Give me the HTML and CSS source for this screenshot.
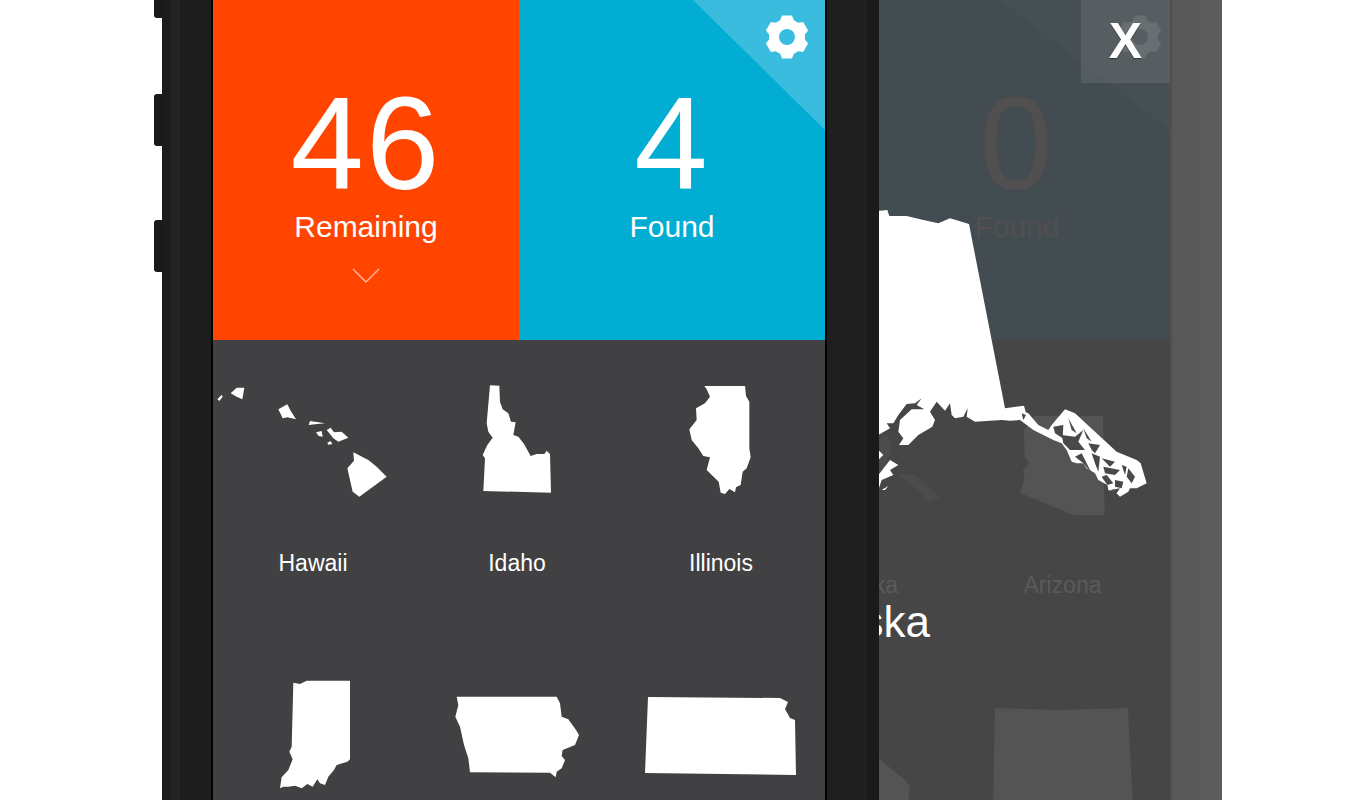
FILE: index.html
```html
<!DOCTYPE html>
<html lang="en">
<head>
    <meta charset="UTF-8">
    <meta name="viewport" content="width=device-width, initial-scale=1.0">
    <title>States</title>
    <link rel="stylesheet" href="styles.css">
</head>
<body>
    <div class="stage">
        <div class="phone">
            <div class="side-button side-button-mute"></div>
            <div class="side-button side-button-up"></div>
            <div class="side-button side-button-down"></div>
            <div class="screen">
                <div class="tiles">
                    <div class="tile tile-remaining">
                        <div class="count">46</div>
                        <div class="tile-label">Remaining</div>
                        <svg class="chevron" viewBox="0 0 28 16"><path d="M1 1 L14 14 L27 1"/></svg>
                    </div>
                    <div class="tile tile-found">
                        <div class="corner"></div>
                        <svg class="gear" viewBox="-24 -24 48 48">
                            <g id="gear-shape">
                                <circle r="13" class="gear-ring"/>
                                <polygon points="-7.5,-15 -5,-21.5 5,-21.5 7.5,-15"/>
                                <polygon points="-7.5,-15 -5,-21.5 5,-21.5 7.5,-15" transform="rotate(60)"/>
                                <polygon points="-7.5,-15 -5,-21.5 5,-21.5 7.5,-15" transform="rotate(120)"/>
                                <polygon points="-7.5,-15 -5,-21.5 5,-21.5 7.5,-15" transform="rotate(180)"/>
                                <polygon points="-7.5,-15 -5,-21.5 5,-21.5 7.5,-15" transform="rotate(240)"/>
                                <polygon points="-7.5,-15 -5,-21.5 5,-21.5 7.5,-15" transform="rotate(300)"/>
                            </g>
                        </svg>
                        <div class="count">4</div>
                        <div class="tile-label">Found</div>
                    </div>
                </div>
                <div class="states">
                    <div class="state">
                        <svg class="map" viewBox="9 30 612 360">
                            <polygon points="22,88 35,75 38,80 28,93"/>
                            <polygon points="62,70 80,53 103,53 97,88 80,80"/>
                            <polygon points="205,118 232,103 242,122 258,148 232,142 218,145"/>
                            <polygon points="296,165 300,153 345,160 315,163"/>
                            <polygon points="318,187 335,183 338,200 326,198"/>
                            <polygon points="350,180 362,173 372,187 395,185 415,203 385,215 370,205"/>
                            <polygon points="352,218 362,213 367,222 355,224"/>
                            <polygon points="430,247 475,270 500,290 530,320 448,380 428,365 412,295 432,272"/>
                        </svg>
                        <div class="state-name">Hawaii</div>
                    </div>
                    <div class="state">
                        <svg class="map" viewBox="-99 30 612 360">
                            <polygon points="120,46 148,47 150,95 158,118 175,130 183,155 197,157 190,195 205,200 222,222 232,240 242,258 260,252 283,252 290,242 300,252 303,368 100,363 105,265 98,255 112,225 128,203 115,185 110,160"/>
                        </svg>
                        <div class="state-name">Idaho</div>
                    </div>
                    <div class="state">
                        <svg class="map" viewBox="513 30 612 360">
                            <polygon points="763,48 885,48 888,78 898,95 898,235 902,262 890,295 878,305 872,345 858,352 855,367 838,357 825,372 812,368 806,335 770,300 780,262 760,258 745,235 725,210 718,178 740,150 738,115 765,100 780,80 770,58"/>
                        </svg>
                        <div class="state-name">Illinois</div>
                    </div>
                    <div class="state">
                        <svg class="map" viewBox="-141 15 612 360">
                            <polygon points="100,38 120,42 140,32 270,32 270,268 262,275 230,285 222,300 205,320 195,345 180,340 172,328 158,350 142,342 125,355 105,347 85,350 70,350 60,355 65,322 85,300 98,268 88,245 95,230"/>
                        </svg>
                    </div>
                    <div class="state">
                        <svg class="map" viewBox="471 15 612 360">
                            <polygon points="590,80 890,80 900,100 905,140 925,148 948,180 957,195 945,225 908,240 905,258 915,270 905,295 890,305 887,322 870,308 630,307 625,265 612,225 600,170 586,140 595,105"/>
                        </svg>
                    </div>
                    <div class="state">
                        <svg class="map" viewBox="621 675 204 120">
                            <polygon points="648,697 780,698 788,702 785,709 790,718 795,720 796,775 645,773"/>
                        </svg>
                    </div>
                </div>
            </div>
        </div>

        <div class="phone-back">
            <div class="screen-back">
                <div class="tiles-back">
                    <div class="tile-back"></div>
                    <div class="tile-back tile-back-found">
                        <div class="corner-back"></div>
                        <svg class="gear gear-back" viewBox="-24 -24 48 48"><use href="#gear-shape"/></svg>
                        <div class="count">0</div>
                        <div class="tile-label">Found</div>
                    </div>
                </div>
                <div class="states-back">
                    <div class="state-back"></div>
                    <div class="state-back">
                        <div class="map-back"></div>
                        <div class="state-name">Alaska</div>
                    </div>
                    <div class="state-back">
                        <svg class="map-back" viewBox="285 630 597 330">
                            <polygon points="500,648 705,648 710,945 615,945 455,878 470,835 465,810 485,790 470,770 468,690"/>
                        </svg>
                        <div class="state-name">Arizona</div>
                    </div>
                    <div class="state-back"></div>
                    <div class="state-back">
                        <svg class="map-back" viewBox="766 700 199 110">
                            <polygon points="830,705 879,757 907,780 912,787 909,810 830,810"/>
                        </svg>
                    </div>
                    <div class="state-back">
                        <svg class="map-back" viewBox="965 700 199 110">
                            <polygon points="997,708 1060,710 1130,708 1135,810 995,810"/>
                        </svg>
                    </div>
                </div>
                <svg class="alaska" viewBox="0 0 900 960">
                    <polygon points="0,35 52,30 58,48 110,48 160,60 205,70 240,55 297,72 405,625 462,617 468,640 450,660 420,662 395,660 315,665 290,650 293,625 280,650 255,655 245,645 240,610 225,632 200,605 180,635 195,660 187,680 145,705 115,735 87,735 100,715 85,695 90,660 125,628 163,628 140,615 155,595 135,610 110,612 85,645 70,670 50,670 60,685 25,705 0,705"/>
                    <g transform="translate(15 570)">
                        <polygon class="alaska-ghost" points="10,150 40,135 50,180 25,240 10,235"/>
                        <polygon class="alaska-ghost" points="70,255 120,255 195,320 165,340 130,300"/>
                        <polygon points="10,180 25,195 10,210"/>
                        <polygon points="10,255 45,210 70,225 45,240 55,255 20,270 10,300"/>
                        <polygon points="20,300 40,288 30,300"/>
                    </g>
                    <g transform="translate(450 600)">
                        <polygon points="0,30 25,40 55,75 85,90 95,75 135,28 165,40 225,95 290,155 350,180 362,190 380,250 350,265 330,265 325,275 300,290 285,275 265,270 262,255 235,240 225,220 200,205 190,190 170,190 155,185 140,150 125,130 100,120 40,90 0,60"/>
                        <polygon class="alaska-cut" points="100,80 130,75 128,115 105,100"/>
                        <polygon class="alaska-cut" points="125,105 165,110 190,90 175,125 195,150 150,150 130,130"/>
                        <polygon class="alaska-cut" points="145,55 170,100 155,90"/>
                        <polygon class="alaska-cut" points="190,85 215,125 200,115"/>
                        <polygon class="alaska-cut" points="205,130 240,135 225,160 215,150"/>
                        <polygon class="alaska-cut" points="165,170 185,160 215,220 190,190"/>
                        <polygon class="alaska-cut" points="215,160 240,170 235,215 225,190"/>
                        <polygon class="alaska-cut" points="245,175 285,185 270,200"/>
                        <polygon class="alaska-cut" points="250,200 300,210 285,225 255,220"/>
                        <polygon class="alaska-cut" points="305,195 320,200 315,225"/>
                        <polygon class="alaska-cut" points="325,205 345,230 335,250 320,230"/>
                        <polygon class="alaska-cut" points="245,230 260,225 280,250 262,255"/>
                        <polygon class="alaska-cut" points="285,240 310,245 305,265 285,260"/>
                        <polygon class="alaska-cut" points="270,270 300,265 290,280"/>
                        <polygon class="alaska-cut" points="5,40 18,45 10,60"/>
                    </g>
                </svg>
                <div class="big-name">Alaska</div>
                <div class="close">X</div>
            </div>
            <div class="bezel-back"></div>
        </div>
    </div>
</body>
</html>
```

FILE: styles.css
```css
body {
    margin: 0;
    background-color: #fff;
    font-family: "Liberation Sans", Arial, sans-serif;
}
.stage {
    display: flex;
    height: 800px;
    padding-left: 162px;
    overflow: hidden;
}

/* front phone */
.phone {
    position: relative;
    z-index: 2;
    flex: none;
    width: 717px;
    padding: 0 52px 0 49px;
    box-sizing: border-box;
    background: linear-gradient(90deg, #1c1c1c 0, #1c1c1c 8px, #232323 8px, #232323 18px, #1d1d1d 18px, #1d1d1d 665px, #1f1f1f 665px, #1f1f1f 705px, #1a1a1a 705px);
}
.side-button {
    position: absolute;
    left: -8px;
    width: 8px;
    background-color: #1a1a1a;
    border-radius: 3px 0 0 3px;
}
.side-button-mute {
    top: -30px;
    height: 48px;
}
.side-button-up {
    top: 94px;
    height: 52px;
}
.side-button-down {
    top: 220px;
    height: 52px;
}
.screen {
    height: 800px;
    border-left: 2px solid #000;
    border-right: 2px solid #000;
    background-color: #414042;
    color: #fff;
    overflow: hidden;
}
.tiles {
    display: grid;
    grid-template-columns: 306px 306px;
    height: 340px;
}
.tile {
    position: relative;
    display: flex;
    flex-direction: column;
    align-items: center;
    padding-top: 89px;
    box-sizing: border-box;
}
.tile-remaining {
    background-color: #ff4500;
}
.tile-found {
    background-color: #02add4;
    overflow: hidden;
}
.count {
    position: relative;
    font-size: 132px;
    line-height: 110px;
    letter-spacing: 2px;
}
.tile-label {
    position: relative;
    margin-top: 10px;
    font-size: 30px;
    line-height: 36px;
}
.chevron {
    width: 28px;
    height: 16px;
    margin-top: 23px;
    fill: none;
    stroke: #ffb59c;
    stroke-width: 1.5;
}
.corner {
    position: absolute;
    top: 0;
    right: 0;
    width: 132px;
    height: 130px;
    background-color: #39bcde;
    clip-path: polygon(0 0, 100% 0, 100% 100%);
}
.gear {
    position: absolute;
    top: 13px;
    right: 14px;
    width: 48px;
    height: 48px;
    fill: #fff;
    stroke: none;
}
.gear-ring {
    fill: none;
    stroke: #fff;
    stroke-width: 10;
}
.states {
    display: grid;
    grid-template-columns: repeat(3, 204px);
    row-gap: 99px;
    padding-top: 40px;
}
.state {
    text-align: center;
}
.map {
    display: block;
    width: 204px;
    height: 120px;
    fill: #fff;
}
.state-name {
    font-size: 23px;
    line-height: 26px;
    margin-top: 50px;
    margin-left: -4px;
}

/* phone behind, dimmed */
.phone-back {
    display: flex;
    flex: none;
    margin-left: -321px;
}
.screen-back {
    position: relative;
    width: 612px;
    height: 800px;
    background-color: #464646;
    overflow: hidden;
}
.tiles-back {
    display: grid;
    grid-template-columns: 306px 306px;
    height: 340px;
    background-color: #434c50;
}
.tile-back-found {
    position: relative;
    display: flex;
    flex-direction: column;
    align-items: center;
    padding-top: 89px;
    box-sizing: border-box;
    color: #524f50;
}
.corner-back {
    position: absolute;
    top: 0;
    right: 0;
    width: 170px;
    height: 130px;
    background-color: rgba(255, 255, 255, 0.02);
    clip-path: polygon(0 0, 100% 0, 100% 100%);
}
.gear-back {
    right: 6px;
    opacity: 0.1;
}
.states-back {
    display: grid;
    grid-template-columns: repeat(3, 199px);
    grid-auto-rows: 290px;
    padding: 70px 8px 0 7px;
    color: #5a5a5a;
}
.state-back {
    text-align: center;
}
.state-back .state-name {
    margin-top: 52px;
    margin-left: 0;
}
.map-back {
    display: block;
    width: 199px;
    height: 110px;
    fill: #545454;
}
.alaska {
    position: absolute;
    top: 200px;
    left: 312px;
    width: 300px;
    height: 320px;
    fill: #fff;
}
.alaska-cut {
    fill: #494949;
}
.alaska-ghost {
    fill: #4c4c4c;
}
.big-name {
    position: absolute;
    top: 596px;
    left: 0;
    right: 0;
    text-align: center;
    font-size: 44px;
    line-height: 52px;
    color: #fff;
}
.close {
    position: absolute;
    top: 0;
    right: 0;
    width: 89px;
    height: 83px;
    background-color: rgba(255, 255, 255, 0.09);
    color: #fff;
    font-size: 50px;
    font-weight: bold;
    line-height: 83px;
    text-align: center;
    text-shadow: 0 1px 1px rgba(0, 0, 0, 0.5);
}
.bezel-back {
    width: 52px;
    height: 800px;
    background: linear-gradient(90deg, #4f4f4f 0, #4f4f4f 2px, #585858 2px, #585858 30px, #5c5c5c 30px);
}
```
